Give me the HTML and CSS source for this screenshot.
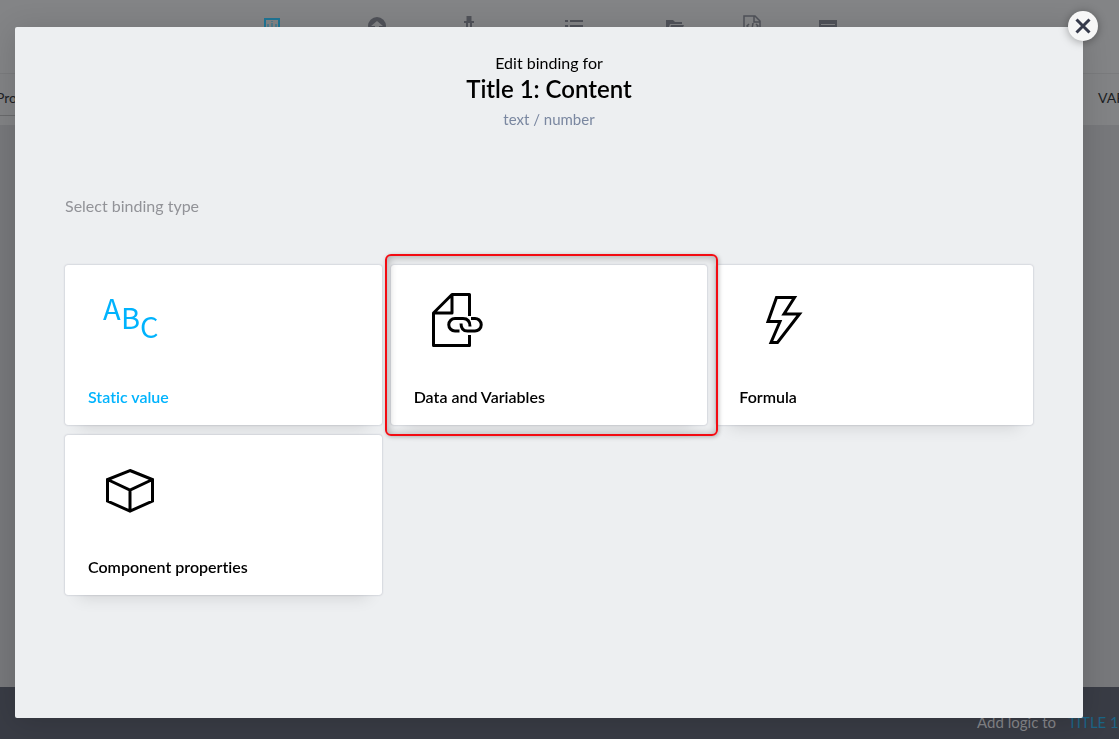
FILE: index.html
```html
<!DOCTYPE html>
<html lang="en">
<head>
<meta charset="utf-8">
<title>Edit binding</title>
<link rel="stylesheet" href="styles.css">
</head>
<body>
<div class="app">
  <nav class="toolbar" aria-label="Main">
    <button class="tool tool-active" type="button" aria-label="Views"><svg width="18" height="22" viewBox="0 0 18 22" fill="none" stroke="currentColor" stroke-width="2"><path d="M2 4h14v15H2z"/><path d="M5 9v7M9 6v1M9 8v8M13 9v7" stroke-width="1"/></svg></button>
    <button class="tool" type="button" aria-label="Publish"><svg width="18" height="22" viewBox="0 0 18 22"><circle cx="9" cy="11" r="9" fill="currentColor"/><path d="M3 11l6-5 6 5h-4v5H7v-5z" fill="#818284"/></svg></button>
    <button class="tool" type="button" aria-label="Plugins"><svg width="10" height="22" viewBox="0 0 10 22" fill="none" stroke="currentColor" stroke-width="2"><path d="M5 1v5" stroke-width="5"/><path d="M0 7h10M3 8v8M7 8v8"/></svg></button>
    <button class="tool" type="button" aria-label="List"><svg width="18" height="22" viewBox="0 0 18 22" fill="none" stroke="currentColor" stroke-width="2"><path d="M0 6h3M5 6h13M0 11h3M5 11h13"/></svg></button>
    <button class="tool" type="button" aria-label="Files"><svg width="18" height="22" viewBox="0 0 18 22" fill="currentColor"><path d="M0 5h7l2 2h7v2H4l-2 6H0zM5 10h13l-3 7H3z"/></svg></button>
    <button class="tool" type="button" aria-label="Code"><svg width="18" height="22" viewBox="0 0 18 22" fill="none" stroke="currentColor" stroke-width="1.5"><path d="M1 1h11l5 5v14H1zM11 1v6h6M6 9l-2 2 2 2M9 14l1-6M13 9l2 2-2 2"/></svg></button>
    <button class="tool" type="button" aria-label="Panel"><svg width="18" height="22" viewBox="0 0 18 22" fill="none" stroke="currentColor" stroke-width="2"><path d="M1 6h16v10H1zM2 8h14M2 11h14"/></svg></button>
  </nav>
  <div class="tabs"><span class="tab-left">Pro</span><span class="tab-right">VAR</span></div>
  <main class="canvas"></main>
  <footer class="footer"><span>Add logic to</span><span class="footer-target">TITLE 1</span></footer>
</div>

<div class="overlay">
  <section class="modal" role="dialog" aria-labelledby="modal-title">
    <button class="close" type="button" aria-label="Close"><svg width="16" height="16" viewBox="0 0 16 16" fill="none" stroke="currentColor" stroke-width="3"><path d="M1.500 1.500l13 13M14.500 1.500l-13 13"/></svg></button>
    <header class="heading">
      <p class="eyebrow">Edit binding for</p>
      <h1 class="title" id="modal-title">Title 1: Content</h1>
      <p class="kind">text / number</p>
    </header>
    <p class="prompt">Select binding type</p>
    <div class="cards">
      <button class="card card-active" type="button">
        <svg class="icon" width="80" height="64" viewBox="0 0 80 64" fill="currentColor"><g class="letters"><text x="15" y="32">A</text><text x="33" y="41">B</text><text x="52" y="50">C</text></g></svg>
        <span>Static value</span>
      </button>
      <button class="card card-marked" type="button">
        <svg class="icon" width="80" height="64" viewBox="0 0 80 64" fill="none" stroke="currentColor" stroke-width="3"><path d="M55.500 28V6.500H38L19.500 25V57.500H55.500V47M38 6.500V25H19.500" stroke-linejoin="round"/><path d="M45.500 43H41a6.250 6.250 0 0 1 0-12.500h8q7 0 7 8"/><path d="M57 30.500h4a6.250 6.250 0 0 1 0 12.500H53.500q-6.500 0-6.500-7.500"/></svg>
        <span>Data and Variables</span>
      </button>
      <button class="card" type="button">
        <svg class="icon" width="80" height="64" viewBox="0 0 80 64" fill="none" stroke="currentColor" stroke-width="3"><path d="M37.500 9.500H55.500L45 26H60.500L38.500 54.500H32L41 33.500H29z"/></svg>
        <span>Formula</span>
      </button>
      <button class="card" type="button">
        <svg class="icon" width="80" height="64" viewBox="0 0 80 64" fill="none" stroke="currentColor" stroke-width="3"><path d="M42 12.500L64.500 21.500V43L42 53L19.500 43V21.500zM19.500 21.500L42 32L64.500 21.500M42 32V53"/></svg>
        <span>Component properties</span>
      </button>
    </div>
  </section>
</div>
</body>
</html>
```
FILE: styles.css
```css
* { box-sizing: border-box; }
body {
  margin: 0;
  font-family: Lato, "Noto Sans", sans-serif;
  font-size: 16px;
  line-height: 20px;
  font-variant-ligatures: none;
  color: #000;
}
h1, p { margin: 0; }
button { font: inherit; color: inherit; border: 0; padding: 0; background: none; cursor: pointer; }
svg { display: block; overflow: visible; }

.app { display: flex; flex-direction: column; height: 100vh; overflow: hidden; }
.toolbar {
  display: grid;
  grid-template-columns: 105px 96px 101px 101px 77px 76px 18px;
  align-items: start;
  height: 74px;
  padding: 15px 0 0 263px;
  background: #838486;
  border-bottom: 1px solid #7a7b7d;
  color: #505259;
}
.tool { justify-self: start; }
.tool-active { color: #1f7595; }
.tabs {
  display: flex;
  justify-content: space-between;
  height: 51px;
  padding-top: 14px;
  background: #828385;
  font-size: 14px;
  color: #1d1f24;
}
.tab-left { margin-left: -4px; width: 24px; height: 28px; border-bottom: 1px solid #696a6c; }
.tab-right { width: 21px; white-space: nowrap; }
.canvas { flex: 1; background: #77787b; }
.footer {
  display: flex;
  justify-content: flex-end;
  gap: 12px;
  height: 52px;
  padding-top: 25px;
  background: #393c45;
  color: #85868a;
  font-size: 15px;
}
.footer-target { width: 51px; white-space: nowrap; color: #1c6485; }

.overlay { position: fixed; inset: 0; padding: 27px 36px 21px 15px; }
.modal {
  position: relative;
  height: 100%;
  padding: 26px 50px;
  background: #edeff1;
  border-radius: 2px;
  box-shadow: 0 4px 30px rgba(0, 0, 0, 0.15);
}
.close {
  position: absolute;
  top: -16px;
  right: -15px;
  display: grid;
  place-items: center;
  width: 30px;
  height: 30px;
  border-radius: 50%;
  background: #f7f7f7;
  color: #363a4b;
  box-shadow: 0 1px 10px rgba(0, 0, 0, 0.35);
}
.heading { text-align: center; }
.title { font-size: 24px; line-height: 32px; font-weight: 600; }
.kind { font-size: 15px; line-height: 28px; color: #7a87a0; }
.prompt { margin-top: 63px; color: #929398; }
.cards { display: grid; grid-template-columns: repeat(3, 1fr); gap: 10px 9px; margin-top: 49px; }
.card {
  display: flex;
  flex-direction: column;
  align-items: flex-start;
  justify-content: space-between;
  height: 160px;
  padding: 23px 23px 18px;
  background: #fff;
  border-radius: 3px;
  box-shadow: 0 0 2px rgba(40, 50, 80, 0.35), 0 16px 16px -14px rgba(0, 0, 0, 0.12);
  font-weight: 600;
  text-align: left;
}
.card-active { color: #00b3fd; }
.card-marked { position: relative; }
.card-marked::after {
  content: "";
  position: absolute;
  inset: -11px -11px -11px -6px;
  border: 2px solid #f30b12;
  border-radius: 6px;
  box-shadow: 1px 1px 4px rgba(0, 0, 0, 0.25), inset 1px 1px 8px rgba(0, 0, 0, 0.3);
}
.letters { font-family: "Noto Sans CJK SC", sans-serif; font-size: 29px; font-weight: 400; }
```
